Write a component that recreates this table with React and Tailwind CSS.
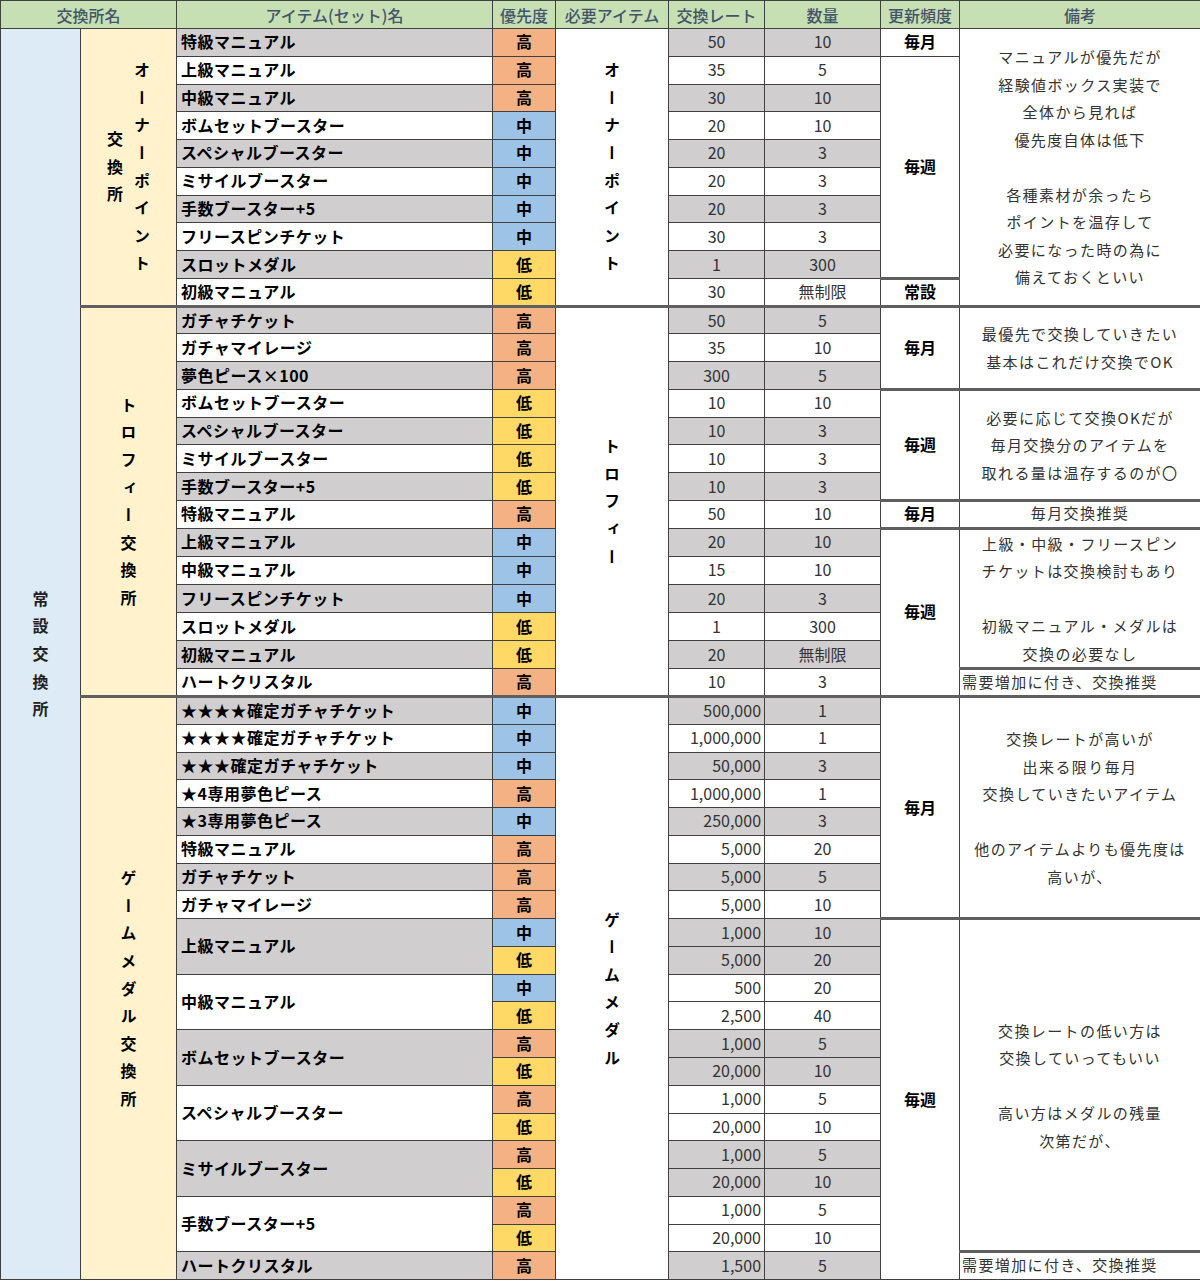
import React from "react";

const PRIO = {
  高: "bg-[#F4B183]",
  中: "bg-[#9DC3E6]",
  低: "bg-[#FFD966]",
};

const sections = [
  {
    label: ["オーナーポイント", "交換所"],
    need: "オーナーポイント",
    right: false,
    groups: [
      ["特級マニュアル", [["高", "50", "10"]]],
      ["上級マニュアル", [["高", "35", "5"]]],
      ["中級マニュアル", [["高", "30", "10"]]],
      ["ボムセットブースター", [["中", "20", "10"]]],
      ["スペシャルブースター", [["中", "20", "3"]]],
      ["ミサイルブースター", [["中", "20", "3"]]],
      ["手数ブースター+5", [["中", "20", "3"]]],
      ["フリースピンチケット", [["中", "30", "3"]]],
      ["スロットメダル", [["低", "1", "300"]]],
      ["初級マニュアル", [["低", "30", "無制限"]]],
    ],
  },
  {
    label: ["トロフィー交換所"],
    need: "トロフィー",
    right: false,
    groups: [
      ["ガチャチケット", [["高", "50", "5"]]],
      ["ガチャマイレージ", [["高", "35", "10"]]],
      ["夢色ピース×100", [["高", "300", "5"]]],
      ["ボムセットブースター", [["低", "10", "10"]]],
      ["スペシャルブースター", [["低", "10", "3"]]],
      ["ミサイルブースター", [["低", "10", "3"]]],
      ["手数ブースター+5", [["低", "10", "3"]]],
      ["特級マニュアル", [["高", "50", "10"]]],
      ["上級マニュアル", [["中", "20", "10"]]],
      ["中級マニュアル", [["中", "15", "10"]]],
      ["フリースピンチケット", [["中", "20", "3"]]],
      ["スロットメダル", [["低", "1", "300"]]],
      ["初級マニュアル", [["低", "20", "無制限"]]],
      ["ハートクリスタル", [["高", "10", "3"]]],
    ],
  },
  {
    label: ["ゲームメダル交換所"],
    need: "ゲームメダル",
    right: true,
    groups: [
      ["★★★★確定ガチャチケット", [["中", "500,000", "1"]]],
      ["★★★★確定ガチャチケット", [["中", "1,000,000", "1"]]],
      ["★★★確定ガチャチケット", [["中", "50,000", "3"]]],
      ["★4専用夢色ピース", [["高", "1,000,000", "1"]]],
      ["★3専用夢色ピース", [["中", "250,000", "3"]]],
      ["特級マニュアル", [["高", "5,000", "20"]]],
      ["ガチャチケット", [["高", "5,000", "5"]]],
      ["ガチャマイレージ", [["高", "5,000", "10"]]],
      ["上級マニュアル", [["中", "1,000", "10"], ["低", "5,000", "20"]]],
      ["中級マニュアル", [["中", "500", "20"], ["低", "2,500", "40"]]],
      ["ボムセットブースター", [["高", "1,000", "5"], ["低", "20,000", "10"]]],
      ["スペシャルブースター", [["高", "1,000", "5"], ["低", "20,000", "10"]]],
      ["ミサイルブースター", [["高", "1,000", "5"], ["低", "20,000", "10"]]],
      ["手数ブースター+5", [["高", "1,000", "5"], ["低", "20,000", "10"]]],
      ["ハートクリスタル", [["高", "1,500", "5"]]],
    ],
  },
];

// 更新頻度 (start row -> span, text)
const freq = {
  0: [1, "毎月"],
  1: [8, "毎週"],
  9: [1, "常設"],
  10: [3, "毎月"],
  13: [4, "毎週"],
  17: [1, "毎月"],
  18: [6, "毎週"],
  24: [8, "毎月"],
  32: [13, "毎週"],
};

// 備考 (start row -> span, lines, left aligned)
const notes = {
  0: [10, ["マニュアルが優先だが", "経験値ボックス実装で", "全体から見れば", "優先度自体は低下", "", "各種素材が余ったら", "ポイントを温存して", "必要になった時の為に", "備えておくといい"]],
  10: [3, ["最優先で交換していきたい", "基本はこれだけ交換でOK"]],
  13: [4, ["必要に応じて交換OKだが", "毎月交換分のアイテムを", "取れる量は温存するのが〇"]],
  17: [1, ["毎月交換推奨"]],
  18: [5, ["上級・中級・フリースピン", "チケットは交換検討もあり", "", "初級マニュアル・メダルは", "交換の必要なし"]],
  23: [1, ["需要増加に付き、交換推奨"], true],
  24: [8, ["交換レートが高いが", "出来る限り毎月", "交換していきたいアイテム", "", "他のアイテムよりも優先度は", "高いが、"]],
  32: [12, ["交換レートの低い方は", "交換していってもいい", "", "高い方はメダルの残量", "次第だが、"]],
  44: [1, ["需要増加に付き、交換推奨"], true],
};

const doubleTop = new Set([9, 10, 13, 17, 18, 23, 24, 32, 44]);

function VText({ cols }) {
  return (
    <div className="flex flex-row-reverse justify-center items-center">
      {cols.map((c, i) => (
        <div key={i} className="flex flex-col w-[27px]">
          {[...c].map((ch, j) => (
            <div key={j} className="h-[27.6px] flex items-center justify-center">
              <span className="[writing-mode:vertical-rl]">{ch}</span>
            </div>
          ))}
        </div>
      ))}
    </div>
  );
}

const cell = "p-0 border border-[#404040]";
const dbl = "border-t-[3px] border-t-double border-t-[#5f5f5f]";

export default function App() {
  const rows = [];
  sections.forEach((s, si) => {
    const sectionSpan = s.groups.reduce((n, g) => n + g[1].length, 0);
    s.groups.forEach(([name, sub], gi) => {
      sub.forEach(([prio, rate, count], k) => {
        rows.push({
          si,
          s,
          sectionSpan,
          sectionStart: gi === 0 && k === 0,
          name,
          groupSpan: sub.length,
          groupStart: k === 0,
          gray: gi % 2 === 0,
          prio,
          rate,
          count,
        });
      });
    });
  });

  return (
    <div className="w-[1200px] h-[1282px] overflow-hidden bg-white font-['Noto_Sans_CJK_JP','Liberation_Sans',sans-serif] text-[16px] leading-[20px]">
      <table className="table-fixed border-collapse w-[1200px]">
        <colgroup>
          <col className="w-[80px]" />
          <col className="w-[96px]" />
          <col className="w-[316px]" />
          <col className="w-[63px]" />
          <col className="w-[113px]" />
          <col className="w-[96px]" />
          <col className="w-[116px]" />
          <col className="w-[79px]" />
          <col className="w-[241px]" />
        </colgroup>
        <thead>
          <tr className="h-[28px] bg-[#C6E0B4] text-[#44546A] font-medium text-center">
            <th colSpan={2} className={`${cell} font-medium`}>交換所名</th>
            <th className={`${cell} font-medium`}>アイテム(セット)名</th>
            <th className={`${cell} font-medium`}>優先度</th>
            <th className={`${cell} font-medium`}>必要アイテム</th>
            <th className={`${cell} font-medium`}>交換レート</th>
            <th className={`${cell} font-medium`}>数量</th>
            <th className={`${cell} font-medium`}>更新頻度</th>
            <th className={`${cell} font-medium`}>備考</th>
          </tr>
        </thead>
        <tbody>
          {rows.map((r, i) => {
            const sec = r.sectionStart && i > 0 ? dbl : "";
            const shade = r.gray ? "bg-[#D0CECE]" : "bg-white";
            const f = freq[i];
            const n = notes[i];
            return (
              <tr key={i} className="h-[27.78px]">
                {i === 0 && (
                  <td rowSpan={rows.length} className={`${cell} bg-[#DDEBF7] font-bold text-[#222]`}>
                    <VText cols={["常設交換所"]} />
                  </td>
                )}
                {r.sectionStart && (
                  <td rowSpan={r.sectionSpan} className={`${cell} ${sec} bg-[#FFF2CC] font-bold text-black`}>
                    <VText cols={r.s.label} />
                  </td>
                )}
                {r.groupStart && (
                  <td rowSpan={r.groupSpan} className={`${cell} ${sec} ${shade} pl-[4px] pb-[2px] font-bold tracking-[0.5px] text-black whitespace-nowrap`}>
                    {r.name}
                  </td>
                )}
                <td className={`${cell} ${sec} ${PRIO[r.prio]} pb-[2px] text-center font-bold text-black`}>{r.prio}</td>
                {r.sectionStart && (
                  <td rowSpan={r.sectionSpan} className={`${cell} ${sec} bg-white font-bold text-black`}>
                    <VText cols={[r.s.need]} />
                  </td>
                )}
                <td className={`${cell} ${sec} ${shade} pb-[2px] text-[#333] ${r.s.right ? "text-right pr-[3px]" : "text-center"}`}>
                  {r.rate}
                </td>
                <td className={`${cell} ${sec} ${shade} pb-[2px] text-[#333] text-center`}>{r.count}</td>
                {f && (
                  <td rowSpan={f[0]} className={`${cell} ${doubleTop.has(i) ? dbl : ""} bg-white pb-[2px] text-center font-bold text-black`}>
                    {f[1]}
                  </td>
                )}
                {n && (
                  <td
                    rowSpan={n[0]}
                    className={`${cell} ${doubleTop.has(i) ? dbl : ""} bg-white text-[15px] text-[#333] tracking-[1.4px] ${n[2] ? "text-left pl-[2px]" : "text-center"}`}
                  >
                    {n[0] === 1 ? (
                      <div className="leading-[20px] pb-[2px] whitespace-nowrap">{n[1][0]}</div>
                    ) : (
                      n[1].map((line, li) => (
                        <div key={li} className="h-[27.5px] leading-[27.5px] whitespace-nowrap">
                          {line || "\u00a0"}
                        </div>
                      ))
                    )}
                  </td>
                )}
              </tr>
            );
          })}
        </tbody>
      </table>
    </div>
  );
}
